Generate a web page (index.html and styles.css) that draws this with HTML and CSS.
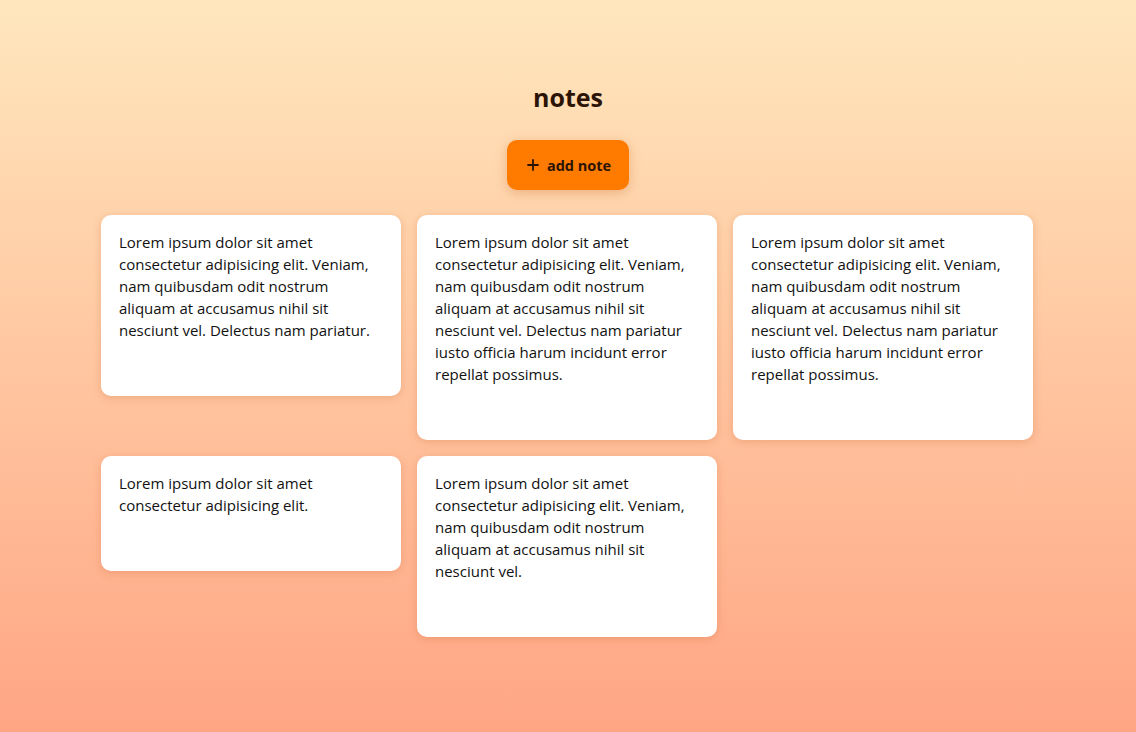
FILE: index.html
```html
<!DOCTYPE html>
<html lang="en">
<head>
<meta charset="utf-8">
<title>notes</title>
<link rel="stylesheet" href="styles.css">
</head>
<body>
<main class="app">
  <h1 class="title">notes</h1>
  <button class="add-btn" type="button">
    <svg class="plus" width="12" height="12" viewBox="0 0 12 12" aria-hidden="true"><path d="M6 1v10M1 6h10" stroke="currentColor" stroke-width="1.8" stroke-linecap="round"/></svg>
    <span>add note</span>
  </button>
  <section class="notes">
    <article class="note"><p>Lorem ipsum dolor sit amet consectetur adipisicing elit. Veniam, nam quibusdam odit nostrum aliquam at accusamus nihil sit nesciunt vel. Delectus nam pariatur.</p></article>
    <article class="note"><p>Lorem ipsum dolor sit amet consectetur adipisicing elit. Veniam, nam quibusdam odit nostrum aliquam at accusamus nihil sit nesciunt vel. Delectus nam pariatur iusto officia harum incidunt error repellat possimus.</p></article>
    <article class="note"><p>Lorem ipsum dolor sit amet consectetur adipisicing elit. Veniam, nam quibusdam odit nostrum aliquam at accusamus nihil sit nesciunt vel. Delectus nam pariatur iusto officia harum incidunt error repellat possimus.</p></article>
    <article class="note"><p>Lorem ipsum dolor sit amet consectetur adipisicing elit.</p></article>
    <article class="note"><p>Lorem ipsum dolor sit amet consectetur adipisicing elit. Veniam, nam quibusdam odit nostrum aliquam at accusamus nihil sit nesciunt vel.</p></article>
  </section>
</main>
</body>
</html>
```

FILE: styles.css
```css
* { box-sizing: border-box; }
html, body { margin: 0; height: 100%; }
body {
  font-family: "Open Sans", "Noto Sans", sans-serif;
  background: linear-gradient(180deg, #ffe7bd 0%, #ffa584 100%);
  color: #111;
  min-height: 732px;
}
.app {
  display: flex;
  flex-direction: column;
  align-items: center;
  padding-top: 81px;
}
.title {
  margin: 0;
  font-size: 25px;
  line-height: 32px;
  font-weight: 700;
  color: #2b1406;
}
.add-btn {
  margin-top: 27px;
  width: 122px;
  height: 50px;
  border: none;
  border-radius: 10px;
  background: #ff7b00;
  color: #2b1406;
  font-family: inherit;
  font-size: 14.5px;
  font-weight: 700;
  display: flex;
  align-items: center;
  justify-content: center;
  gap: 8px;
  padding: 0 0 0 2px;
  box-shadow: 0 3px 12px rgba(200, 110, 40, 0.35);
}
.plus { display: block; }
.notes {
  margin-top: 25px;
  margin-right: 2px;
  display: grid;
  grid-template-columns: repeat(3, 300px);
  gap: 16px;
  align-items: start;
}
.note {
  background: #fff;
  border-radius: 10px;
  padding: 16px 18px 55px;
  box-shadow: 0 2px 8px rgba(200, 110, 60, 0.3);
}
.note p {
  margin: 0;
  font-size: 15px;
  line-height: 22px;
  color: #111;
}
```
